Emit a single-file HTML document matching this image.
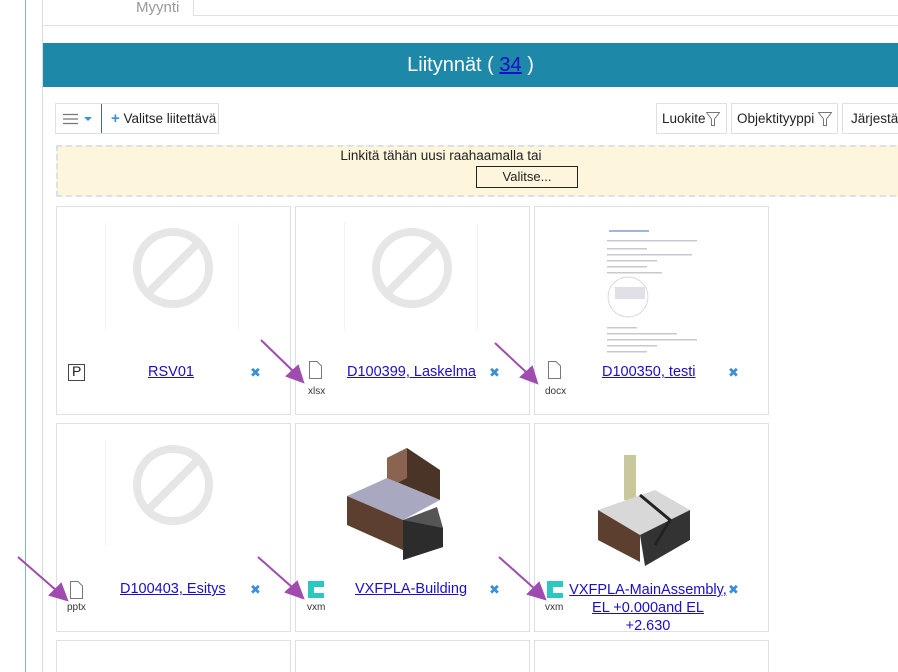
<!DOCTYPE html>
<html style="width:898px;height:672px;overflow:hidden"><head><meta charset="utf-8"><style>
*{box-sizing:border-box;margin:0;padding:0}
body{width:898px;height:672px;overflow:hidden;background:#fff;font-family:"Liberation Sans","DejaVu Sans",sans-serif;position:relative;color:#222}
.a{position:absolute}
.card{position:absolute;width:235px;height:209px;border:1px solid #dde0ea;background:#fff}
.lnk{position:absolute;color:#1a0dcc;text-decoration:underline;font-size:14px;text-align:center}
.x{position:absolute;color:#3b8fd6;font-size:13px;font-weight:bold}
.ext{position:absolute;font-size:10px;color:#333}
.btn{position:absolute;border:1px solid #dde0ea;height:31px;font-size:13px;line-height:29px;padding-left:5px;background:#fff}
</style></head><body>
<div class="a" style="left:25px;top:0;width:1px;height:672px;background:#7ab8cc"></div>
<div class="a" style="left:42px;top:0;width:1px;height:672px;background:#dcdcdc"></div>
<div class="a" style="left:42px;top:-2px;width:856px;height:28px;border:1px solid #dde0ea;border-top:none;border-right:none"></div>
<div class="a" style="left:136px;top:-1px;font-size:15px;color:#999">Myynti</div>
<div class="a" style="left:193px;top:-2px;width:705px;height:18px;border-left:1px solid #dde0ea;border-bottom:1px solid #dde0ea"></div>
<div class="a" style="left:43px;top:43px;width:855px;height:44px;background:#1e88a8;color:#fff;font-size:20px;text-align:center;line-height:44px">Liitynnät ( <span style="color:#1a0dcc;text-decoration:underline">34</span> )</div>
<div class="btn" style="left:55px;top:103px;width:164px;padding:0">
 <svg class="a" style="left:7px;top:9px" width="16" height="12"><path d="M0 1.5H15M0 6H15M0 10.5H15" stroke="#777" stroke-width="1.2"/></svg>
 <svg class="a" style="left:28px;top:13px" width="8" height="5"><path d="M0 0H8L4 4Z" fill="#3b8fd6"/></svg>
 <div class="a" style="left:45px;top:0;width:1px;height:29px;background:#3a6ea8"></div>
 <span class="a" style="left:55px;top:0;font-size:13.5px"><b style="color:#3b8fd6;font-size:15px">+</b> Valitse liitettävä</span>
</div>
<div class="btn" style="left:656px;top:103px;width:71px;font-size:13.5px">Luokite</div>
<svg class="a" style="left:706px;top:112px" width="14" height="15"><path d="M0.5 0.5H13.5L8.5 7V13.5H5.5V7Z" fill="none" stroke="#777"/></svg>
<div class="btn" style="left:731px;top:103px;width:107px;font-size:13.5px">Objektityyppi</div>
<svg class="a" style="left:818px;top:112px" width="14" height="15"><path d="M0.5 0.5H13.5L8.5 7V13.5H5.5V7Z" fill="none" stroke="#777"/></svg>
<div class="btn" style="left:842px;top:103px;width:60px;padding-left:8px;font-size:13.5px">Järjestä</div>
<div class="a" style="left:56px;top:145px;width:850px;height:52px;background:#fdf6dc;border:2px dashed #dde0ea"></div>
<div class="a" style="left:56px;top:148px;width:770px;text-align:center;font-size:13.5px">Linkitä tähän uusi raahaamalla tai</div>
<div class="a" style="left:476px;top:166px;width:102px;height:22px;border:1px solid #222;font-size:13px;text-align:center;line-height:20px">Valitse...</div>

<div class="card" style="left:56px;top:206px"></div>
<div class="card" style="left:295px;top:206px"></div>
<div class="card" style="left:534px;top:206px"></div>
<div class="card" style="left:56px;top:423px"></div>
<div class="card" style="left:295px;top:423px"></div>
<div class="card" style="left:534px;top:423px"></div>
<div class="card" style="left:56px;top:640px;height:40px"></div>
<div class="card" style="left:295px;top:640px;height:40px"></div>
<div class="card" style="left:534px;top:640px;height:40px"></div>

<svg class="a" style="left:0;top:0" width="898" height="672">
 <g fill="none" stroke="#e6e6e6" stroke-width="8">
  <circle cx="173" cy="268" r="36"/><path d="M198 243L148 293"/>
  <circle cx="412" cy="268" r="36"/><path d="M437 243L387 293"/>
  <circle cx="173" cy="485" r="36"/><path d="M198 460L148 510"/>
 </g>
 <g stroke="#f3f3f3"><path d="M105.5 223V330M238.5 223V330M344.5 223V330M477.5 223V330M105.5 440V547"/></g>
 <g fill="#c8c8d0"><rect x="609" y="230" width="40" height="2" fill="#9fb6e0"/>
 <rect x="607" y="240" width="90" height="1.5"/><rect x="607" y="248" width="40" height="1.5"/><rect x="607" y="254" width="85" height="1.5"/><rect x="607" y="260" width="50" height="1.5"/><rect x="607" y="266" width="40" height="1.5"/><rect x="607" y="272" width="55" height="1.5"/>
 <rect x="615" y="287" width="30" height="12" fill="#e0e0e6"/>
 <rect x="607" y="327" width="30" height="1.5"/><rect x="607" y="333" width="70" height="1.5"/><rect x="607" y="339" width="90" height="1.5"/><rect x="607" y="345" width="50" height="1.5"/><rect x="607" y="351" width="40" height="1.5"/></g>
 <circle cx="628" cy="297" r="20" fill="none" stroke="#ccc" stroke-width=".7"/>
 <path d="M387 458L407 448L440 470L440 500L387 478Z" fill="#4a3428"/>
 <path d="M387 458L407 448L407 478L387 488Z" fill="#8a6450"/>
 <path d="M347 496L387 478L440 500L403 520Z" fill="#a8a8c0"/>
 <path d="M347 496L403 520L403 550L347 525Z" fill="#5c3f2e"/>
 <path d="M403 520L437 507L443 528L443 547L403 560Z" fill="#555"/>
 <path d="M403 520L403 560L443 547L443 528Z" fill="#2c2c2c"/>
 <path d="M624 455L636 455L636 500L624 500Z" fill="#c8c89c"/>
 <path d="M598 510L655 490L690 510L640 535Z" fill="#d8d8d8"/>
 <path d="M598 510L640 535L640 562L598 540Z" fill="#5c3f2e"/>
 <path d="M640 535L690 510L690 540L645 566Z" fill="#333"/>
 <path d="M640 495L670 520L655 545" stroke="#222" stroke-width="3" fill="none"/>
 <g stroke="#a04bb0" stroke-width="2" fill="#a04bb0">
  <path d="M261 340L294 372"/><path d="M303 382L287 376L298 366Z"/>
  <path d="M495 343L527 373"/><path d="M537 383L521 377L532 367Z"/>
  <path d="M18 557L57 591"/><path d="M67 600L50 595L61 584Z"/>
  <path d="M258 557L293 588"/><path d="M303 598L286 592L297 582Z"/>
  <path d="M499 557L536 590"/><path d="M545 599L528 594L539 583Z"/>
 </g>
 <g fill="#fff" stroke="#777"><path d="M309.5 361.5H317L321.5 366V378.5H309.5Z"/><path d="M548.5 361.5H556L560.5 366V378.5H548.5Z"/><path d="M70.5 581.5H78L82.5 586V598.5H70.5Z"/></g>
 <g fill="#2ac8c0"><path d="M308 581H324V587H314V593H324V598H308Z"/><path d="M547 581H563V587H553V593H563V598H547Z"/></g>
 <rect x="68.5" y="364.5" width="16" height="16" fill="#fff" stroke="#444"/>
</svg>
<div class="a" style="left:72px;top:363px;font-size:14px">P</div>
<div class="ext" style="left:308px;top:386px">xlsx</div>
<div class="ext" style="left:545px;top:386px">docx</div>
<div class="ext" style="left:67px;top:602px">pptx</div>
<div class="ext" style="left:307px;top:602px">vxm</div>
<div class="ext" style="left:545px;top:602px">vxm</div>

<div class="lnk" style="left:148px;top:364px;font-size:14.5px">RSV01</div>
<div class="lnk" style="left:347px;top:364px;font-size:14.5px">D100399, Laskelma</div>
<div class="lnk" style="left:602px;top:364px;font-size:14.5px">D100350, testi</div>
<div class="lnk" style="left:120px;top:581px;font-size:14.5px">D100403, Esitys</div>
<div class="lnk" style="left:355px;top:581px;font-size:14.5px">VXFPLA-Building</div>
<div class="lnk" style="left:566px;top:581px;width:164px;line-height:18px;font-size:14.5px">VXFPLA-MainAssembly,<br>EL +0.000and EL<br><span style="text-decoration:none;display:inline-block">+2.630</span></div>

<div class="x" style="left:250px;top:365px">✖</div>
<div class="x" style="left:489px;top:365px">✖</div>
<div class="x" style="left:728px;top:365px">✖</div>
<div class="x" style="left:250px;top:582px">✖</div>
<div class="x" style="left:489px;top:582px">✖</div>
<div class="x" style="left:728px;top:582px">✖</div>
</body></html>
